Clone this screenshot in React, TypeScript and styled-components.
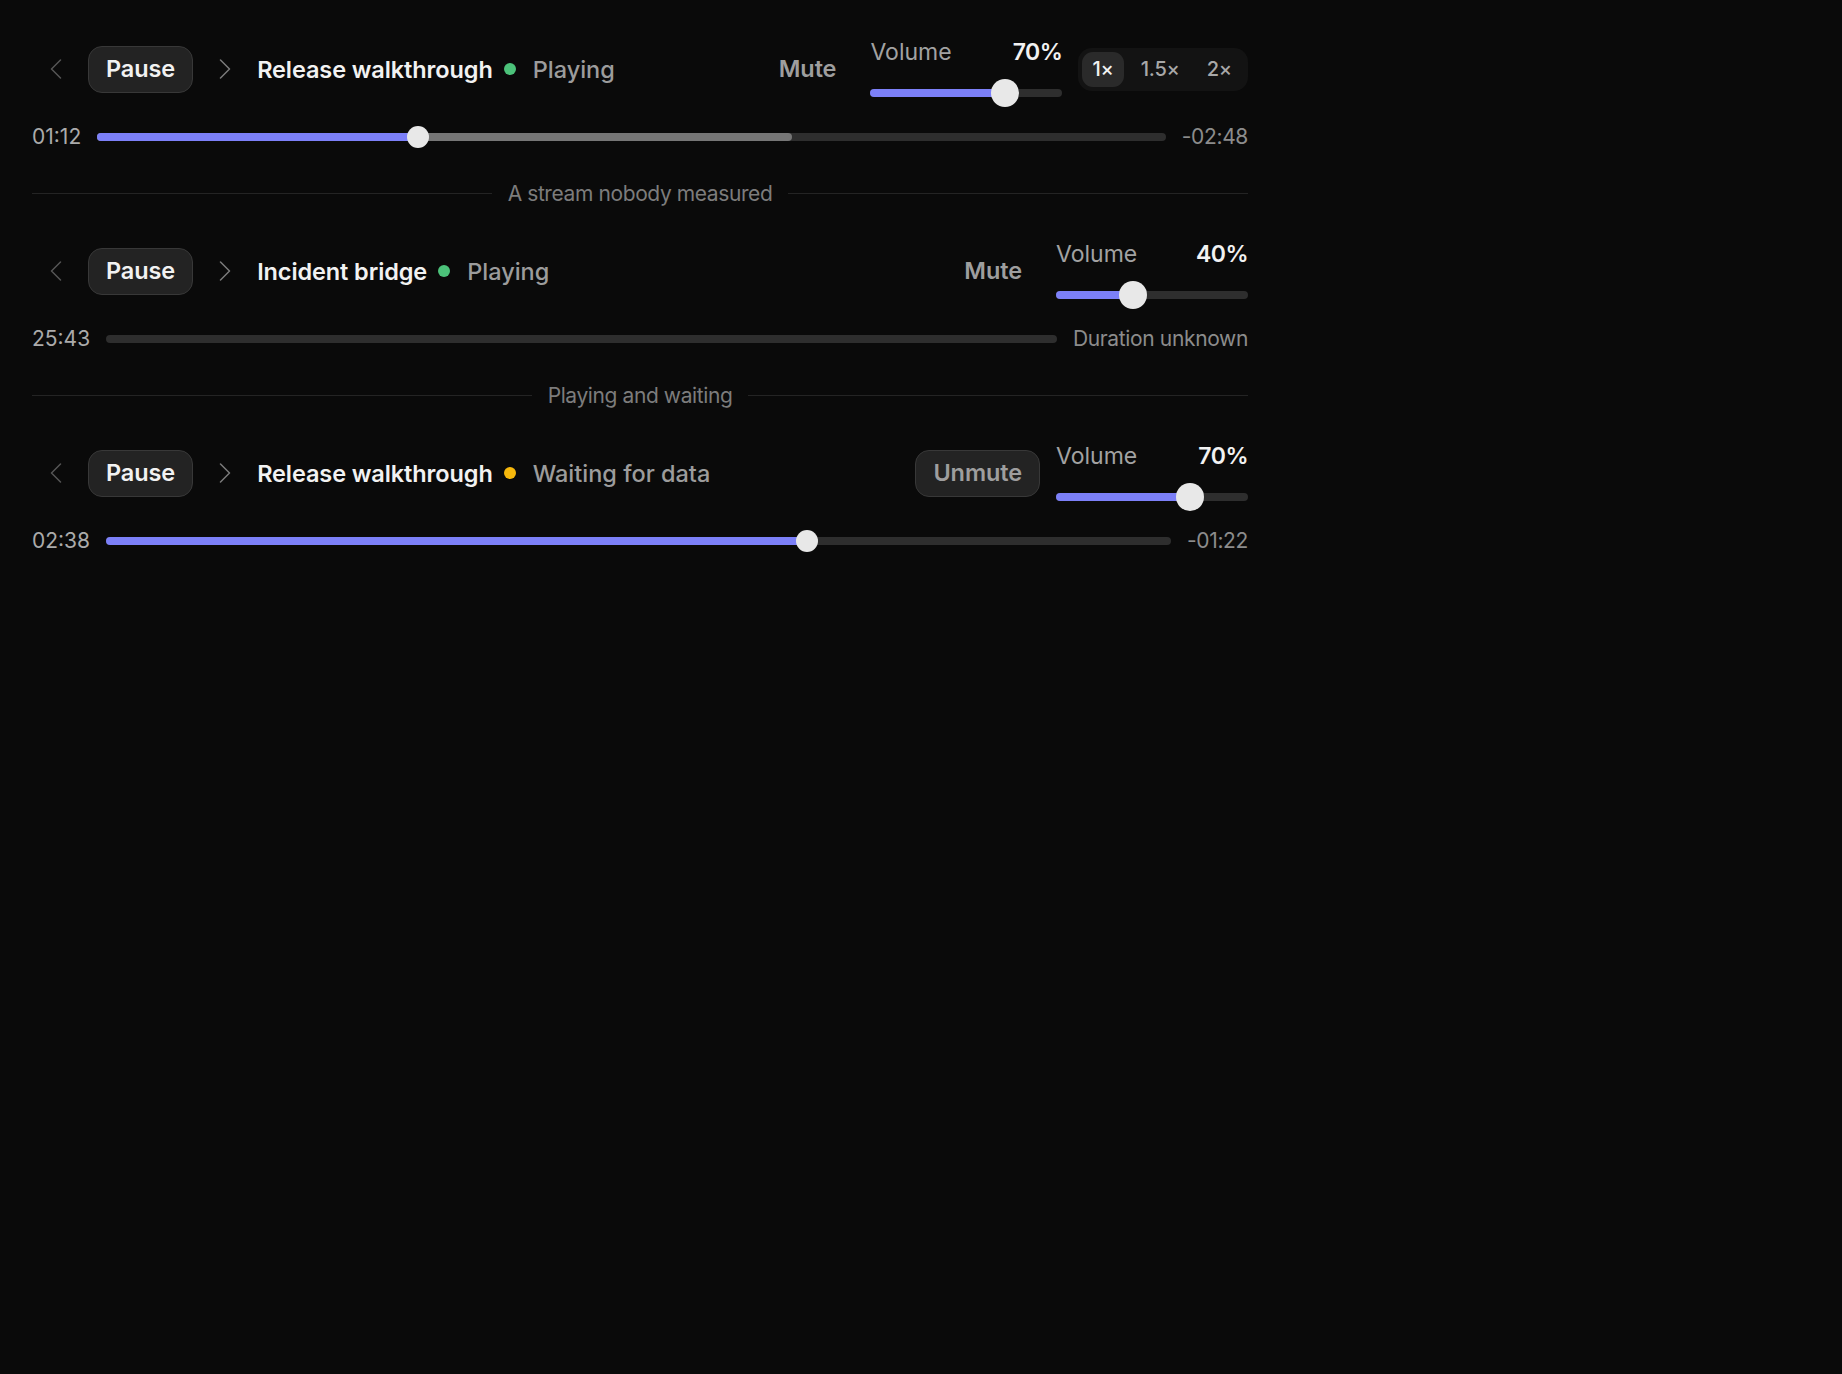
import React from "react";
import styled, { createGlobalStyle } from "styled-components";

const GlobalStyle = createGlobalStyle`
  html, body {
    margin: 0;
    padding: 0;
    background: #0a0a0a;
  }
  body {
    font-family: Inter, "Noto Sans", "Liberation Sans", sans-serif;
    color: #f0f0f0;
    -webkit-font-smoothing: antialiased;
  }
  button {
    font-family: inherit;
  }
`;

const ACCENT = "#7c80f8";

type Status = "playing" | "waiting";

interface PlayerData {
  title: string;
  status: Status;
  statusLabel: string;
  muted: boolean;
  volume: number;
  speeds?: string[];
  activeSpeed?: string;
  elapsed: string;
  remaining: string;
  progress: number | null;
  buffered?: number;
}

const Page = styled.main`
  width: 1216px;
  padding: 31px 32px;
  display: flex;
  flex-direction: column;
  gap: 24px;
`;

const Player = styled.section`
  display: flex;
  flex-direction: column;
  gap: 14px;
`;

const ControlsRow = styled.div`
  height: 76px;
  display: flex;
  align-items: center;
  justify-content: space-between;
`;

const LeftGroup = styled.div`
  display: flex;
  align-items: center;
  gap: 8px;
`;

const RightGroup = styled.div`
  display: flex;
  align-items: center;
  gap: 16px;
`;

const NavButton = styled.button<{ $dim?: boolean }>`
  width: 48px;
  height: 47px;
  padding: 0;
  border: none;
  background: transparent;
  display: flex;
  align-items: center;
  justify-content: center;
  color: ${(p) => (p.$dim ? "#555" : "#7a7a7a")};
  cursor: pointer;
`;

const PillButton = styled.button<{ $ghost?: boolean; $bright?: boolean }>`
  height: 47px;
  padding: 0 17px;
  border-radius: 14px;
  border: 1px solid ${(p) => (p.$ghost ? "transparent" : "#383838")};
  background: ${(p) => (p.$ghost ? "transparent" : "#232323")};
  color: ${(p) => (p.$bright ? "#f2f2f2" : "#9e9e9e")};
  font-size: 23.5px;
  font-weight: 600;
  line-height: 1;
  letter-spacing: -0.1px;
  cursor: pointer;
`;

const Title = styled.span`
  font-size: 23.5px;
  font-weight: 600;
  letter-spacing: -0.1px;
  color: #f2f2f2;
  white-space: nowrap;
`;

const StatusWrap = styled.span`
  display: flex;
  align-items: center;
  gap: 17px;
  margin-left: 3px;
`;

const Dot = styled.span<{ $status: Status }>`
  width: 12px;
  height: 12px;
  border-radius: 50%;
  background: ${(p) => (p.$status === "playing" ? "#4cc27a" : "#f7b80c")};
`;

const StatusLabel = styled.span`
  font-size: 23.5px;
  font-weight: 500;
  color: #9c9c9c;
  white-space: nowrap;
`;

const VolumeBlock = styled.div`
  width: 192px;
  display: flex;
  flex-direction: column;
  gap: 6px;
`;

const VolumeHeader = styled.div`
  height: 42px;
  display: flex;
  align-items: center;
  justify-content: space-between;
  font-size: 23px;
  line-height: 42px;
`;

const VolumeLabel = styled.span`
  color: #a2a2a2;
  font-weight: 400;
`;

const VolumeValue = styled.span`
  color: #f2f2f2;
  font-weight: 600;
  letter-spacing: -0.5px;
`;

const SliderArea = styled.div<{ $height: number }>`
  height: ${(p) => p.$height}px;
  display: flex;
  align-items: center;
  flex: 1 1 auto;
  min-width: 0;
`;

const Track = styled.div<{ $height: number }>`
  position: relative;
  width: 100%;
  height: ${(p) => p.$height}px;
  border-radius: 999px;
  background: #2e2e2e;
`;

const Bar = styled.div<{ $color: string }>`
  position: absolute;
  left: 0;
  top: 0;
  bottom: 0;
  border-radius: 999px;
  background: ${(p) => p.$color};
`;

const Thumb = styled.div<{ $size: number }>`
  position: absolute;
  top: 50%;
  width: ${(p) => p.$size}px;
  height: ${(p) => p.$size}px;
  border-radius: 50%;
  background: #e8e8e8;
  transform: translate(-50%, -50%);
`;

const SpeedGroup = styled.div`
  height: 43px;
  box-sizing: border-box;
  padding: 4px 6px 4px 4px;
  display: flex;
  align-items: center;
  gap: 7px;
  border-radius: 14px;
  background: #131313;
`;

const SpeedOption = styled.button<{ $active?: boolean }>`
  height: 35px;
  padding: 0 10px;
  border: none;
  border-radius: 11px;
  background: ${(p) => (p.$active ? "#2a2a2a" : "transparent")};
  color: ${(p) => (p.$active ? "#f2f2f2" : "#a8a8a8")};
  font-size: 20px;
  font-weight: 500;
  letter-spacing: -0.2px;
  cursor: pointer;
`;

const ProgressRow = styled.div`
  height: 32px;
  display: flex;
  align-items: center;
  gap: 16px;
`;

const TimeLabel = styled.span<{ $dim?: boolean }>`
  font-size: 21px;
  line-height: 32px;
  letter-spacing: ${(p) => (p.$dim ? "-0.35px" : "0")};
  color: ${(p) => (p.$dim ? "#8c8c8c" : "#ababab")};
  white-space: nowrap;
`;

const Divider = styled.div`
  height: 32px;
  display: flex;
  align-items: center;
  gap: 16px;
`;

const DividerLine = styled.div`
  flex: 1;
  height: 1px;
  background: #242424;
`;

const DividerLabel = styled.span`
  font-size: 21px;
  letter-spacing: -0.4px;
  color: #7c7c7c;
  white-space: nowrap;
`;

const Chevron = ({ dir }: { dir: "left" | "right" }) => (
  <svg width="12" height="20" viewBox="0 0 12 20" fill="none">
    <path
      d={dir === "left" ? "M10.5 1 L1.5 10 L10.5 19" : "M1.5 1 L10.5 10 L1.5 19"}
      stroke="currentColor"
      strokeWidth="1.5"
      strokeLinecap="round"
      strokeLinejoin="round"
    />
  </svg>
);

const VolumeControl = ({ volume }: { volume: number }) => (
  <VolumeBlock>
    <VolumeHeader>
      <VolumeLabel>Volume</VolumeLabel>
      <VolumeValue>{volume}%</VolumeValue>
    </VolumeHeader>
    <SliderArea $height={28}>
      <Track $height={8}>
        <Bar $color={ACCENT} style={{ width: `${volume}%` }} />
        <Thumb $size={28} style={{ left: `${volume}%` }} />
      </Track>
    </SliderArea>
  </VolumeBlock>
);

const MediaPlayer = ({ data }: { data: PlayerData }) => (
  <Player>
    <ControlsRow>
      <LeftGroup>
        <NavButton $dim aria-label="Previous">
          <Chevron dir="left" />
        </NavButton>
        <PillButton $bright>Pause</PillButton>
        <NavButton aria-label="Next">
          <Chevron dir="right" />
        </NavButton>
        <Title>{data.title}</Title>
        <StatusWrap>
          <Dot $status={data.status} />
          <StatusLabel>{data.statusLabel}</StatusLabel>
        </StatusWrap>
      </LeftGroup>
      <RightGroup>
        <PillButton $ghost={!data.muted}>{data.muted ? "Unmute" : "Mute"}</PillButton>
        <VolumeControl volume={data.volume} />
        {data.speeds && (
          <SpeedGroup>
            {data.speeds.map((s) => (
              <SpeedOption key={s} $active={s === data.activeSpeed}>
                {s}
              </SpeedOption>
            ))}
          </SpeedGroup>
        )}
      </RightGroup>
    </ControlsRow>
    <ProgressRow>
      <TimeLabel>{data.elapsed}</TimeLabel>
      <SliderArea $height={22}>
        <Track $height={8}>
          {data.buffered !== undefined && (
            <Bar $color="#767676" style={{ width: `${data.buffered}%` }} />
          )}
          {data.progress !== null && (
            <>
              <Bar $color={ACCENT} style={{ width: `${data.progress}%` }} />
              <Thumb $size={22} style={{ left: `${data.progress}%` }} />
            </>
          )}
        </Track>
      </SliderArea>
      <TimeLabel $dim>{data.remaining}</TimeLabel>
    </ProgressRow>
  </Player>
);

const SectionDivider = ({ label }: { label: string }) => (
  <Divider>
    <DividerLine />
    <DividerLabel>{label}</DividerLabel>
    <DividerLine />
  </Divider>
);

const players: PlayerData[] = [
  {
    title: "Release walkthrough",
    status: "playing",
    statusLabel: "Playing",
    muted: false,
    volume: 70,
    speeds: ["1×", "1.5×", "2×"],
    activeSpeed: "1×",
    elapsed: "01:12",
    remaining: "-02:48",
    progress: 30,
    buffered: 65,
  },
  {
    title: "Incident bridge",
    status: "playing",
    statusLabel: "Playing",
    muted: false,
    volume: 40,
    elapsed: "25:43",
    remaining: "Duration unknown",
    progress: null,
  },
  {
    title: "Release walkthrough",
    status: "waiting",
    statusLabel: "Waiting for data",
    muted: true,
    volume: 70,
    elapsed: "02:38",
    remaining: "-01:22",
    progress: (158 / 240) * 100,
  },
];

export default function App() {
  return (
    <>
      <GlobalStyle />
      <Page>
        <MediaPlayer data={players[0]} />
        <SectionDivider label="A stream nobody measured" />
        <MediaPlayer data={players[1]} />
        <SectionDivider label="Playing and waiting" />
        <MediaPlayer data={players[2]} />
      </Page>
    </>
  );
}
